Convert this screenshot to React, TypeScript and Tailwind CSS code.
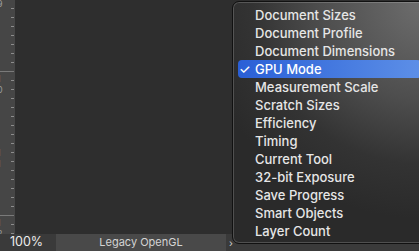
import React from 'react';

const items = [
  'Document Sizes',
  'Document Profile',
  'Document Dimensions',
  'GPU Mode',
  'Measurement Scale',
  'Scratch Sizes',
  'Efficiency',
  'Timing',
  'Current Tool',
  '32-bit Exposure',
  'Save Progress',
  'Smart Objects',
  'Layer Count',
];

function Ruler() {
  // ticks every 9px, a long divider every 16 ticks
  const ticks = [];
  for (let i = 0; i < 27; i++) {
    const y = 8 + i * 9;
    const long = (y - 71) % 144 === 0;
    ticks.push(
      <line key={i} x1={long ? 0 : 11} x2={14} y1={y + 0.5} y2={y + 0.5} stroke={long ? '#7a7a7a' : '#8c8c8c'} strokeWidth={1} />
    );
  }
  return (
    <svg width={15} height={234} className="block">
      <rect width={15} height={234} fill="#464646" />
      {ticks}
      <g fill="#9a9a9a" fontFamily="Inter, sans-serif" fontSize={9}>
        <text x={-3} y={7}>9</text>
        <text x={-3} y={82}>1</text>
        <text x={-3} y={93}>0</text>
        <text x={-3} y={156}>1</text>
        <text x={-3} y={167}>1</text>
        <text x={-3} y={226}>1</text>
        <text x={-3} y={237}>2</text>
      </g>
    </svg>
  );
}

export default function App() {
  return (
    <div className="relative w-[419px] h-[251px] overflow-hidden bg-[#2e2e2e] flex flex-col font-['Inter',sans-serif]">
      <div className="flex flex-1">
        <Ruler />
        <div className="flex-1 bg-[#2e2e2e]" />
      </div>

      {/* status bar */}
      <div className="h-[17px] flex items-center bg-[#3a3a3a]">
        <span className="w-[56px] pl-[10px] text-[12.5px] text-[#ececec] leading-none">100%</span>
        <div className="w-[170px] h-full bg-[#494949] flex items-center justify-center text-[11px] text-[#d4d4d4] leading-none">
          Legacy OpenGL
        </div>
        <span className="ml-[3px] text-[10px] text-[#cfcfcf] leading-none">›</span>
      </div>

      {/* popup menu */}
      <div className="absolute left-[232px] top-[1px] w-[195px] h-[243px] rounded-[7px] border border-[#111] shadow-[inset_0_0_0_1px_rgba(255,255,255,0.18)] bg-[radial-gradient(ellipse_120%_90%_at_100%_0%,#6e6e6e_0%,#4e4e4e_45%,#333_75%,#2a2a2a_100%)] px-[5px] py-[4px]">
        {items.map((label) => {
          const active = label === 'GPU Mode';
          return (
            <div
              key={label}
              className={
                'h-[18px] flex items-center rounded-[4px] text-[13px] font-medium leading-none ' +
                (active
                  ? 'bg-gradient-to-r from-[#2a5fd6] to-[#5d8fe7] text-white'
                  : 'text-[#e6e6e6]')
              }
            >
              <span className="w-[17px] pl-[1px] text-[13px]">{active ? '✓' : ''}</span>
              <span>{label}</span>
            </div>
          );
        })}
      </div>
    </div>
  );
}
